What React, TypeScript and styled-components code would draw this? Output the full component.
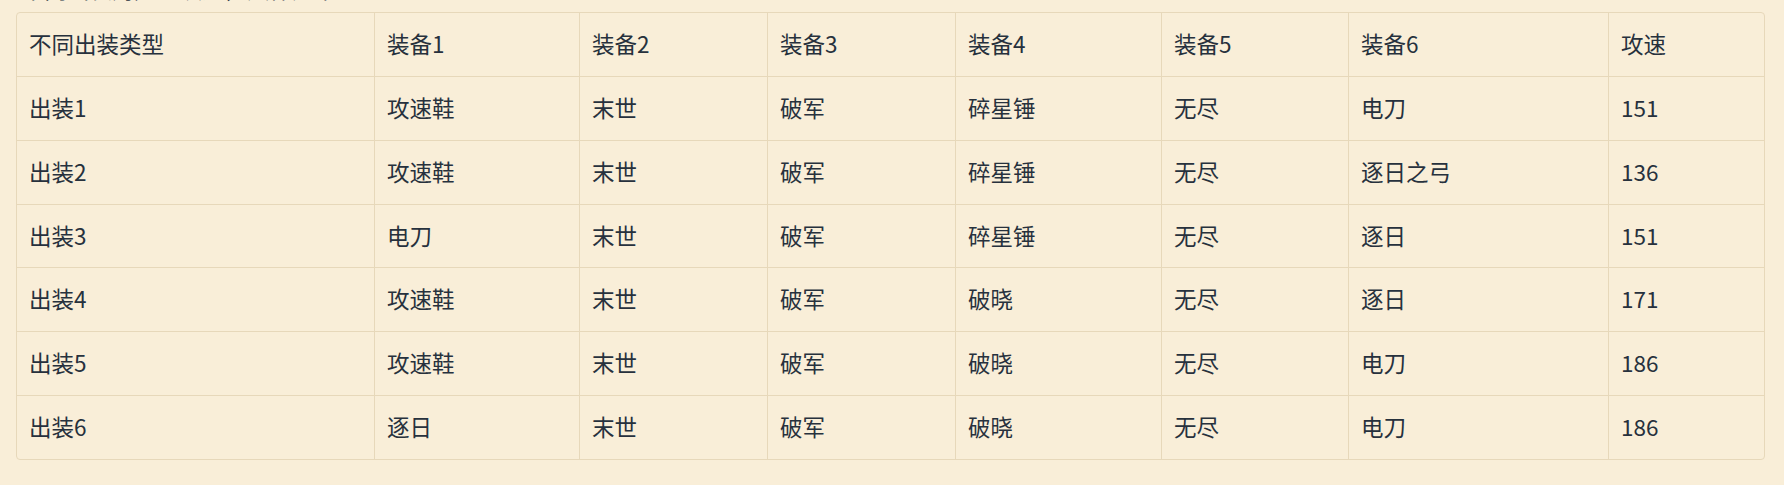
import React from "react";
import styled, { createGlobalStyle } from "styled-components";

const GlobalStyle = createGlobalStyle`
  html, body {
    margin: 0;
    padding: 0;
    background: #f9eed8;
  }
  body {
    font-family: "Noto Sans CJK SC", "Noto Sans", sans-serif;
    color: #27313d;
  }
`;

const Page = styled.div`
  display: flow-root;
  overflow: hidden;
  padding: 0 16px;
  min-height: 485px;
  box-sizing: border-box;
`;

const Intro = styled.p`
  margin: -28px 0 7px 0;
  padding-left: 6px;
  font-size: 22.5px;
  line-height: 33px;
  color: #27313d;
  white-space: nowrap;
`;

const TableFrame = styled.div`
  width: 1749px;
  box-sizing: border-box;
  border: 1px solid #e7d8ba;
  border-radius: 4px;
  overflow: hidden;
  background: #f9eed8;
`;

const Table = styled.table`
  width: 100%;
  table-layout: fixed;
  border-collapse: separate;
  border-spacing: 0;
`;

const Col = styled.col<{ $w: number }>`
  width: ${(p) => p.$w}px;
`;

const Cell = styled.td<{ $lastCol?: boolean; $lastRow?: boolean }>`
  padding: 14px 12px 16px 12px;
  font-size: 22.5px;
  line-height: 32.86px;
  font-weight: 400;
  text-align: left;
  white-space: nowrap;
  color: #27313d;
  border-right: ${(p) => (p.$lastCol ? "none" : "1px solid #e7d8ba")};
  border-bottom: ${(p) => (p.$lastRow ? "none" : "1px solid #e7d8ba")};
`;

const widths = [358, 205, 188, 188, 206, 187, 260, 155];

const header = ["不同出装类型", "装备1", "装备2", "装备3", "装备4", "装备5", "装备6", "攻速"];

const rows: string[][] = [
  ["出装1", "攻速鞋", "末世", "破军", "碎星锤", "无尽", "电刀", "151"],
  ["出装2", "攻速鞋", "末世", "破军", "碎星锤", "无尽", "逐日之弓", "136"],
  ["出装3", "电刀", "末世", "破军", "碎星锤", "无尽", "逐日", "151"],
  ["出装4", "攻速鞋", "末世", "破军", "破晓", "无尽", "逐日", "171"],
  ["出装5", "攻速鞋", "末世", "破军", "破晓", "无尽", "电刀", "186"],
  ["出装6", "逐日", "末世", "破军", "破晓", "无尽", "电刀", "186"],
];

export default function App() {
  const all = [header, ...rows];
  return (
    <>
      <GlobalStyle />
      <Page>
        <Intro>不同出装对应的攻速，具体如下：</Intro>
        <TableFrame>
          <Table>
            <colgroup>
              {widths.map((w, i) => (
                <Col key={i} $w={w} />
              ))}
            </colgroup>
            <tbody>
              {all.map((r, ri) => (
                <tr key={ri}>
                  {r.map((c, ci) => (
                    <Cell
                      key={ci}
                      $lastCol={ci === r.length - 1}
                      $lastRow={ri === all.length - 1}
                    >
                      {c}
                    </Cell>
                  ))}
                </tr>
              ))}
            </tbody>
          </Table>
        </TableFrame>
      </Page>
    </>
  );
}
